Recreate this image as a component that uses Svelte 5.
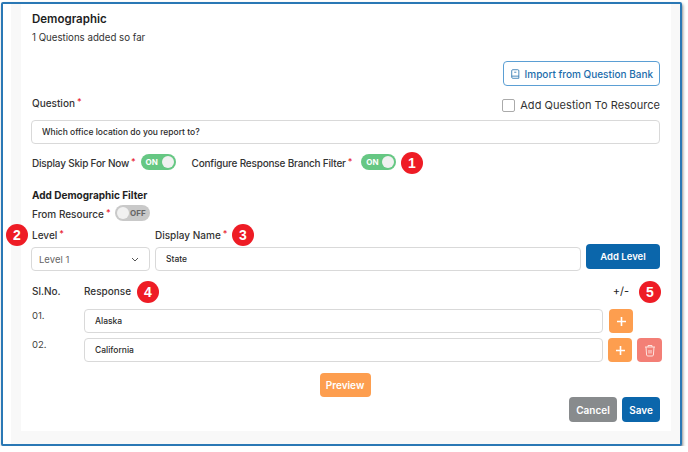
<script>
  let questionText = "Which office location do you report to?";
  let displayName = "State";
  const responses = [
    { no: "01.", value: "Alaska", canDelete: false },
    { no: "02.", value: "California", canDelete: true }
  ];
  const callouts = [
    { n: 1, x: 412, y: 163 },
    { n: 2, x: 17, y: 235 },
    { n: 3, x: 243, y: 235 },
    { n: 4, x: 148, y: 292 },
    { n: 5, x: 650, y: 292 }
  ];
</script>

<style>
  :global(body) {
    background: #fff;
    font-family: "Inter", "Liberation Sans", sans-serif;
    color: #2b2b2b;
  }

  .frame {
    position: relative;
    box-sizing: border-box;
    width: 681px;
    height: 444px;
    margin: 2px 0 0 1px;
    border: 2px solid #2a78b5;
    border-radius: 2px;
    background: #fff;
    box-shadow: 1px 2px 3px rgba(0, 0, 0, 0.45);
    overflow: hidden;
    padding-left: 8px;
  }

  .page {
    height: 100%;
    background: #f8f8f8;
    padding-left: 10px;
  }

  .card {
    box-sizing: border-box;
    width: 650px;
    height: 427px;
    background: #fff;
    padding: 0 11px 0 10px;
    display: flex;
    flex-direction: column;
  }

  h2 {
    margin: 7px 0 0 1px;
    font-size: 11.5px;
    line-height: 16px;
    font-weight: 600;
    color: #1e1e1e;
  }

  .count {
    margin: 3px 0 0 1px;
    font-size: 9.7px;
    line-height: 16px;
    color: #333;
  }

  .import-row {
    display: flex;
    justify-content: flex-end;
    margin-top: 15px;
  }

  .import {
    box-sizing: border-box;
    width: 157px;
    height: 25px;
    display: flex;
    align-items: center;
    gap: 5px;
    padding: 0 6px 0 7px;
    background: #fff;
    border: 1px solid #5b9fd4;
    border-radius: 4px;
    color: #1c6cab;
    font: 500 10px "Inter", sans-serif;
    white-space: nowrap;
  }

  .question-head {
    display: flex;
    justify-content: space-between;
    height: 33px;
    margin-top: 1px;
    padding-left: 1px;
  }

  .label {
    font-size: 10px;
    line-height: 14px;
    color: #333;
    font-weight: 500;
    white-space: nowrap;
  }

  .question-head .label {
    margin-top: 8px;
  }

  .req {
    color: #e8232f;
    font-size: 9px;
    vertical-align: 2px;
    margin-left: 2px;
  }

  .add-res {
    display: flex;
    align-items: center;
    gap: 5px;
    height: 18px;
    margin-top: 9px;
    font-size: 11px;
    letter-spacing: 0.05px;
    color: #333;
  }

  .check {
    box-sizing: border-box;
    width: 13px;
    height: 13px;
    border: 1px solid #aaa;
    border-radius: 2px;
  }

  .field {
    box-sizing: border-box;
    height: 24px;
    display: flex;
    align-items: center;
    padding: 0 10px;
    background: #fff;
    border: 1px solid #d9d9d9;
    border-radius: 4px;
    font-size: 8.5px;
    font-weight: 500;
    color: #2b2b2b;
    white-space: nowrap;
  }

  .toggles {
    display: flex;
    align-items: center;
    margin: 8px 0 0 1px;
    height: 20px;
  }

  .toggles .label {
    letter-spacing: -0.2px;
  }

  .toggles .label + .switch {
    margin-left: 5px;
  }

  .toggles .switch:last-child {
    margin-left: 9px;
  }

  .toggles .switch + .label {
    margin-left: 16px;
  }

  .switch {
    box-sizing: border-box;
    width: 35px;
    height: 16px;
    flex: none;
    display: flex;
    align-items: center;
    justify-content: space-between;
    padding: 0 2px 0 5px;
    border-radius: 8px;
    background: #66c783;
    color: #fff;
    font-size: 8px;
    font-weight: 700;
  }

  .switch.off {
    background: #c9c9c9;
    color: #666;
    padding: 0 4px 0 2px;
  }

  .knob {
    width: 12px;
    height: 12px;
    border-radius: 50%;
    background: #f1f1f1;
  }

  h3 {
    margin: 16px 0 0 1px;
    font-size: 10px;
    line-height: 14px;
    font-weight: 700;
    color: #1e1e1e;
  }

  .from {
    display: flex;
    align-items: center;
    gap: 4px;
    height: 16px;
    margin: 3px 0 0 1px;
  }

  .level-labels {
    display: flex;
    margin: 6px 0 0 1px;
    height: 14px;
  }

  .level-labels .label:first-child {
    width: 123px;
  }

  .level-row {
    display: flex;
    gap: 5px;
    margin-top: 5px;
    height: 27px;
  }

  .select {
    width: 119px;
    justify-content: space-between;
    font-size: 9.5px;
    font-weight: 400;
    color: #666;
    padding: 0 10px 0 7px;
    margin-top: 1px;
  }

  .name {
    width: 426px;
    margin-top: 1px;
  }

  .btn {
    box-sizing: border-box;
    border: none;
    border-radius: 4px;
    color: #fff;
    font: 600 9.5px "Inter", sans-serif;
    white-space: nowrap;
    padding: 0;
  }

  .blue {
    background: #0b66ab;
  }

  .add-level {
    width: 74px;
    height: 25px;
    margin-top: -2px;
  }

  .resp-head {
    display: flex;
    align-items: center;
    height: 14px;
    margin: 11px 0 0 1px;
  }

  .resp-head .label:first-child {
    width: 52px;
  }

  .plusminus {
    margin-left: auto;
    margin-right: 31px;
    font-size: 11px;
    color: #222;
  }

  .resp-list {
    display: flex;
    flex-direction: column;
    gap: 5px;
    margin-top: 11px;
  }

  .resp-row {
    display: flex;
    height: 24px;
  }

  .no {
    width: 53px;
    flex: none;
    padding-left: 1px;
    box-sizing: border-box;
    font-size: 9.5px;
    line-height: 14px;
    color: #444;
  }

  .resp-input {
    width: 519px;
    flex: none;
  }

  .square {
    width: 24px;
    height: 24px;
    flex: none;
    display: flex;
    align-items: center;
    justify-content: center;
    margin-left: 5px;
  }

  .first-add {
    margin-left: 6px;
  }

  .orange {
    background: #fd9e4f;
  }

  .red {
    background: #f37f76;
    width: 25px;
  }

  .preview-row {
    display: flex;
    justify-content: center;
    margin-top: 11px;
    padding-right: 1px;
  }

  .preview {
    width: 51px;
    height: 24px;
    font-size: 10px;
  }

  .actions {
    display: flex;
    justify-content: flex-end;
    gap: 5px;
  }

  .cancel {
    width: 48px;
    height: 25px;
    background: #888b8d;
    font-size: 10px;
  }

  .save {
    width: 38px;
    height: 25px;
    font-size: 10px;
  }

  .callout {
    position: absolute;
    width: 22px;
    height: 22px;
    margin: -11px 0 0 -11px;
    display: flex;
    align-items: center;
    justify-content: center;
    border-radius: 50%;
    background: #ee1c25;
    color: #fff;
    font: 700 14px "Liberation Sans", sans-serif;
  }
</style>

<div class="frame">
  <div class="page">
    <div class="card">
      <h2>Demographic</h2>
      <div class="count">1 Questions added so far</div>

      <div class="import-row">
        <button class="import">
          <svg width="12" height="14" viewBox="0 0 12 14" fill="none" stroke="#1c6cab" stroke-width="1.1">
            <path d="M2.500 1h7a1.500 1.500 0 0 1 1.500 1.500V13H2.500A1.500 1.500 0 0 1 1 11.500V2.500A1.500 1.500 0 0 1 2.500 1Z" />
            <path d="M1 10h10M4.500 4.500h3" />
          </svg>
          Import from Question Bank
        </button>
      </div>

      <div class="question-head">
        <div class="label">Question<span class="req">*</span></div>
        <div class="add-res"><span class="check"></span>Add Question To Resource</div>
      </div>
      <div class="field">{questionText}</div>

      <div class="toggles">
        <span class="label">Display Skip For Now<span class="req">*</span></span>
        <div class="switch">ON<span class="knob"></span></div>
        <span class="label">Configure Response Branch Filter<span class="req">*</span></span>
        <div class="switch">ON<span class="knob"></span></div>
      </div>

      <h3>Add Demographic Filter</h3>
      <div class="from">
        <span class="label">From Resource<span class="req">*</span></span>
        <div class="switch off"><span class="knob"></span>OFF</div>
      </div>

      <div class="level-labels">
        <span class="label">Level<span class="req">*</span></span>
        <span class="label">Display Name<span class="req">*</span></span>
      </div>
      <div class="level-row">
        <div class="field select">
          Level 1
          <svg width="8" height="5" viewBox="0 0 8 5" fill="none" stroke="#555" stroke-width="1">
            <path d="M1 1l3 3 3-3" />
          </svg>
        </div>
        <div class="field name">{displayName}</div>
        <button class="btn blue add-level">Add Level</button>
      </div>

      <div class="resp-head">
        <span class="label">Sl.No.</span>
        <span class="label">Response</span>
        <span class="plusminus">+/-</span>
      </div>

      <div class="resp-list">
        {#each responses as r}
          <div class="resp-row">
            <div class="no">{r.no}</div>
            <div class="field resp-input">{r.value}</div>
            <button class="btn orange square" class:first-add={!r.canDelete} aria-label="Add">
              <svg width="11" height="11" viewBox="0 0 11 11" stroke="#fff" stroke-width="1.6">
                <path d="M5.500 1v9M1 5.500h9" />
              </svg>
            </button>
            {#if r.canDelete}
              <button class="btn red square" aria-label="Delete">
                <svg width="12" height="13" viewBox="0 0 12 13" fill="none" stroke="#fde3df" stroke-width="1">
                  <path d="M1 3h10M4 3V1.500h4V3M2 3l.6 8a1.200 1.200 0 0 0 1.200 1h4.400a1.200 1.200 0 0 0 1.200-1L10 3M5 6v3.500M7 6v3.500" />
                </svg>
              </button>
            {/if}
          </div>
        {/each}
      </div>

      <div class="preview-row"><button class="btn orange preview">Preview</button></div>

      <div class="actions">
        <button class="btn cancel">Cancel</button>
        <button class="btn blue save">Save</button>
      </div>
    </div>
  </div>

  {#each callouts as c}
    <div class="callout" style="left: {c.x - 3}px; top: {c.y - 4}px">{c.n}</div>
  {/each}
</div>
